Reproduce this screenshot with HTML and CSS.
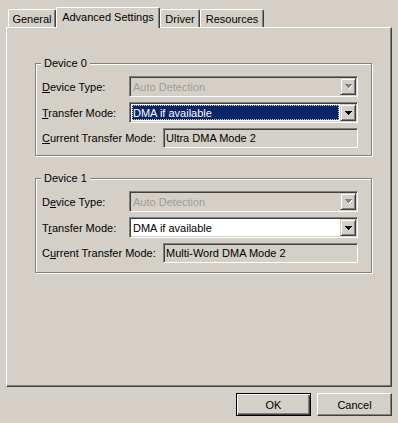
FILE: index.html
```html
<!DOCTYPE html>
<html lang="en">
<head>
    <meta charset="UTF-8">
    <title>Advanced Settings</title>
    <link rel="stylesheet" href="styles.css">
</head>
<body>
    <div class="dialog">
        <div class="tabs">
            <div class="tab tab-general">General</div>
            <div class="tab tab-active tab-advanced">Advanced Settings</div>
            <div class="tab tab-driver">Driver</div>
            <div class="tab tab-resources">Resources</div>
        </div>

        <div class="panel">
            <!-- Device 0 -->
            <div class="group">
                <span class="legend">Device 0</span>
                <div class="row">
                    <span class="label label-combo"><u>D</u>evice Type:</span>
                    <div class="combo">
                        <span class="combo-text disabled">Auto Detection</span>
                        <span class="combo-btn">
                            <svg width="7" height="5" viewBox="0 0 7 5" class="arrow">
                                <path d="M1 1h7v1h-7zM2 2h5v1h-5zM3 3h3v1h-3zM4 4h1v1h-1z" fill="#fff"/>
                                <path d="M0 0h7v1h-7zM1 1h5v1h-5zM2 2h3v1h-3zM3 3h1v1h-1z" fill="#808080"/>
                            </svg>
                        </span>
                    </div>
                </div>
                <div class="row">
                    <span class="label label-combo"><u>T</u>ransfer Mode:</span>
                    <div class="combo combo-white">
                        <span class="combo-text"><span class="selected">DMA if available</span></span>
                        <span class="combo-btn">
                            <svg width="7" height="4" viewBox="0 0 7 4" class="arrow">
                                <path d="M0 0h7v1h-7zM1 1h5v1h-5zM2 2h3v1h-3zM3 3h1v1h-1z" fill="#000"/>
                            </svg>
                        </span>
                    </div>
                </div>
                <div class="row row-last">
                    <span class="label label-current"><u>C</u>urrent Transfer Mode:</span>
                    <div class="readonly">Ultra DMA Mode 2</div>
                </div>
            </div>

            <!-- Device 1 -->
            <div class="group group-second">
                <span class="legend">Device 1</span>
                <div class="row">
                    <span class="label label-combo">D<u>e</u>vice Type:</span>
                    <div class="combo">
                        <span class="combo-text disabled">Auto Detection</span>
                        <span class="combo-btn">
                            <svg width="7" height="5" viewBox="0 0 7 5" class="arrow">
                                <path d="M1 1h7v1h-7zM2 2h5v1h-5zM3 3h3v1h-3zM4 4h1v1h-1z" fill="#fff"/>
                                <path d="M0 0h7v1h-7zM1 1h5v1h-5zM2 2h3v1h-3zM3 3h1v1h-1z" fill="#808080"/>
                            </svg>
                        </span>
                    </div>
                </div>
                <div class="row">
                    <span class="label label-combo">T<u>r</u>ansfer Mode:</span>
                    <div class="combo combo-white">
                        <span class="combo-text">DMA if available</span>
                        <span class="combo-btn">
                            <svg width="7" height="4" viewBox="0 0 7 4" class="arrow">
                                <path d="M0 0h7v1h-7zM1 1h5v1h-5zM2 2h3v1h-3zM3 3h1v1h-1z" fill="#000"/>
                            </svg>
                        </span>
                    </div>
                </div>
                <div class="row row-last">
                    <span class="label label-current">C<u>u</u>rrent Transfer Mode:</span>
                    <div class="readonly">Multi-Word DMA Mode 2</div>
                </div>
            </div>
        </div>

        <div class="buttons">
            <button class="btn btn-default">OK</button>
            <button class="btn">Cancel</button>
        </div>
    </div>
</body>
</html>
```

FILE: styles.css
```css
body {
    margin: 0;
    background: #d4d0c8;
    font-family: "Liberation Sans", Arial, sans-serif;
    font-size: 11px;
    color: #000;
}
.dialog {
    width: 386px;
    padding: 7px 6px 0 6px;
}

/* tabs */
.tabs {
    display: flex;
    align-items: flex-end;
    height: 20px;
    padding-left: 2px;
}
.tab {
    height: 18px;
    box-sizing: border-box;
    border-top: 1px solid #fff;
    border-left: 1px solid #fff;
    border-right: 1px solid #404040;
    box-shadow: inset -1px 0 #808080;
    border-radius: 2px 2px 0 0;
    display: flex;
    align-items: center;
    justify-content: center;
    padding-top: 1px;
}
.tab-active {
    position: relative;
    z-index: 1;
    height: 21px;
    margin-bottom: -1px;
    padding-top: 0;
    padding-bottom: 3px;
    background: #d4d0c8;
}
.tab-general { width: 48px; }
.tab-advanced { width: 104px; }
.tab-driver { width: 40px; }
.tab-resources { width: 64px; }

.panel {
    height: 360px;
    box-sizing: border-box;
    border: 1px solid;
    border-color: #fff #404040 #404040 #fff;
    box-shadow: inset -1px -1px #808080;
    padding-top: 35px;
}

/* group boxes */
.group {
    position: relative;
    width: 337px;
    margin-left: 28px;
    box-sizing: border-box;
    border: 1px solid #808080;
    box-shadow: 1px 1px #fff, inset 1px 1px #fff;
    padding: 12px 0 7px 6px;
}
.group-second {
    margin-top: 22px;
    padding-bottom: 9px;
}
.legend {
    position: absolute;
    top: -7px;
    left: 5px;
    padding: 0 3px;
    line-height: 13px;
    background: #d4d0c8;
}
.row {
    display: flex;
    align-items: center;
    height: 21px;
    margin-bottom: 5px;
}
.row-last {
    height: 20px;
    margin-bottom: 0;
}
.label-combo { width: 87px; }
.label-current { width: 121px; }

/* combo boxes */
.combo, .readonly {
    box-sizing: border-box;
    border: 1px solid;
    border-color: #808080 #fff #fff #808080;
    box-shadow: inset 1px 1px #404040, inset -1px -1px #d4d0c8;
    padding: 1px;
}
.combo {
    width: 229px;
    height: 21px;
    display: flex;
    background: #d4d0c8;
}
.combo-white {
    background: #fff;
}
.combo-text {
    flex: 1;
    display: flex;
    align-items: center;
    padding: 1px;
}
.combo-text.disabled {
    color: #a09d97;
    padding-left: 2px;
}
.combo-white .combo-text {
    padding-left: 2px;
}
.selected {
    flex: 1;
    align-self: stretch;
    display: flex;
    align-items: center;
    margin-left: -1px;
    padding-left: 1px;
    background: #0a246a;
    color: #fff;
    outline: 1px dotted #d4d0c8;
    outline-offset: -1px;
}
.combo-btn {
    width: 16px;
    height: 17px;
    box-sizing: border-box;
    display: flex;
    align-items: center;
    justify-content: center;
    background: #d4d0c8;
    border: 1px solid;
    border-color: #d4d0c8 #404040 #404040 #d4d0c8;
    box-shadow: inset 1px 1px #fff, inset -1px -1px #808080;
}
.arrow {
    display: block;
}
.readonly {
    width: 195px;
    height: 20px;
    display: flex;
    align-items: center;
    padding-left: 2px;
    background: #d4d0c8;
}

/* dialog buttons */
.buttons {
    display: flex;
    justify-content: flex-end;
    gap: 6px;
    margin-top: 6px;
}
.btn {
    width: 75px;
    height: 23px;
    box-sizing: border-box;
    padding: 0;
    font: inherit;
    color: #000;
    background: #d4d0c8;
    border: 1px solid;
    border-color: #fff #404040 #404040 #fff;
    box-shadow: inset -1px -1px #808080;
}
.btn-default {
    border-color: #000;
    box-shadow: inset 1px 1px #fff, inset -1px -1px #404040, inset -2px -2px #808080;
}
```
